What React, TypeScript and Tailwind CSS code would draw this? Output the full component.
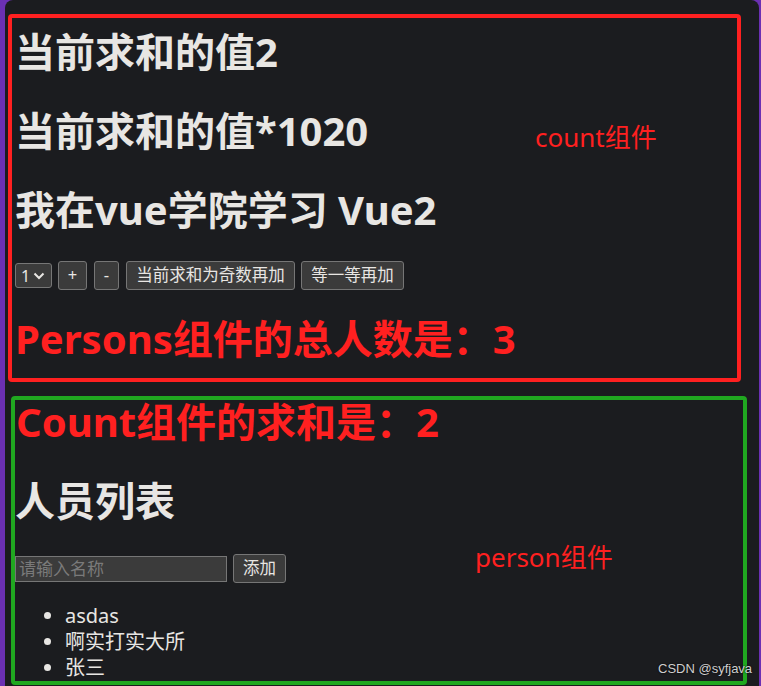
import React from "react";

const FONT = '"Noto Sans", "Noto Sans CJK SC", sans-serif';

function Btn({ children, className = "" }: { children: React.ReactNode; className?: string }) {
  return (
    <div
      className={`h-[29px] flex items-center justify-center px-[8px] border border-[#767676] bg-[#3b3b3b] rounded-[3px] text-[16.5px] leading-none text-[#e8e6e3] ${className}`}
    >
      {children}
    </div>
  );
}

export default function App() {
  return (
    <div className="w-[761px] h-[686px] bg-[#6b30b3] flex overflow-hidden" style={{ fontFamily: FONT }}>
      <div className="w-[5px] shrink-0" />
      <div className="relative w-[754px] h-[686px] bg-[#1b1c1f] rounded-t-[8px] flex flex-col">
        {/* Count component */}
        <div className="ml-[3px] mt-[14px] w-[733px] h-[368px] border-[4px] border-[#ff2020] rounded-[4px] px-[3px] flex flex-col">
          <div className="mt-[10px] h-[48px] leading-[48px] text-[40px] font-bold text-[#e8e6e3]">当前求和的值2</div>
          <div className="mt-[31px] h-[48px] leading-[48px] text-[40px] font-bold text-[#e8e6e3]">当前求和的值*1020</div>
          <div className="mt-[31px] h-[48px] leading-[48px] text-[40px] font-bold text-[#e8e6e3]">我在vue学院学习 Vue2</div>
          <div className="mt-[27px] flex items-center gap-[6px]">
            <div className="w-[37px] h-[25px] flex items-center pl-[5px] gap-[3px] border border-[#767676] bg-[#3b3b3b] rounded-[3px] text-[16px] leading-none text-[#e8e6e3]">
              <span>1</span>
              <svg width="12" height="8" viewBox="0 0 12 8" fill="none">
                <path d="M1.5 1.5 L6 6 L10.5 1.5" stroke="#e8e6e3" strokeWidth="2" />
              </svg>
            </div>
            <Btn className="w-[29px]">+</Btn>
            <Btn className="w-[25px] ml-[1px]">-</Btn>
            <Btn className="w-[169px] ml-[1px]">当前求和为奇数再加</Btn>
            <Btn className="w-[103px]">等一等再加</Btn>
          </div>
          <div className="mt-[25px] h-[48px] leading-[48px] text-[40px] font-bold text-[#ff2020]">Persons组件的总人数是：3</div>
        </div>
        <div className="absolute left-[530px] top-[121px] text-[26px] leading-[32px] text-[#ff2020]">count组件</div>

        {/* Person component */}
        <div className="ml-[6px] mt-[14px] w-[736px] h-[289px] border-[4px] border-[#20a820] rounded-[4px] flex flex-col">
          <div className="h-[44px] leading-[44px] text-[40px] font-bold text-[#ff2020] pl-[1px]">Count组件的求和是：2</div>
          <div className="mt-[33px] h-[48px] leading-[48px] text-[40px] font-bold text-[#e8e6e3]">人员列表</div>
          <div className="mt-[29px] flex items-center gap-[6px]">
            <input
              className="w-[212px] h-[26px] border border-[#767676] bg-[#3b3b3b] text-[17px] px-[3px] text-[#e8e6e3] placeholder:text-[#7a7a7a] outline-none"
              placeholder="请输入名称"
            />
            <Btn className="w-[53px]">添加</Btn>
          </div>
          <ul className="mt-[20px] pl-[50px] list-disc text-[20px] leading-[26px] text-[#e8e6e3] marker:text-[#e8e6e3]">
            <li>asdas</li>
            <li>啊实打实大所</li>
            <li>张三</li>
          </ul>
        </div>
        <div className="absolute left-[470px] top-[541px] text-[26px] leading-[32px] text-[#ff2020]">person组件</div>
        <div
          className="absolute left-[653px] top-[660px] text-[13px] leading-[18px] text-[#cfcfcf]"
          style={{ fontFamily: '"Liberation Sans", Arial, sans-serif', textShadow: "0 0 2px #000" }}
        >
          CSDN @syfjava
        </div>
      </div>
      <div className="w-[2px] shrink-0" />
    </div>
  );
}
